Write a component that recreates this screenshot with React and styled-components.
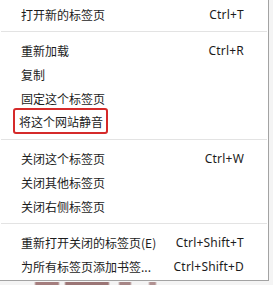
import React from "react";
import styled, { createGlobalStyle } from "styled-components";

const Global = createGlobalStyle`
  html, body { margin: 0; padding: 0; background: #f4f4f4; }
  body { width: 273px; height: 285px; overflow: hidden; }
  #root { width: 273px; height: 285px; }
`;

const Page = styled.div`
  position: relative;
  width: 273px;
  height: 285px;
  overflow: hidden;
  font-family: "Noto Sans CJK SC", "Noto Sans", sans-serif;
`;

const Menu = styled.div`
  width: 270px;
  margin: -1px 0 0 -1px;
  padding: 2px 0 2px;
  background: #ffffff;
  border: 1px solid #a3a3a3;
  box-sizing: border-box;
  display: flex;
  flex-direction: column;
`;

const Row = styled.div`
  height: 24px;
  display: flex;
  align-items: center;
  justify-content: space-between;
  padding: 0 24px 0 21px;
  font-size: 12px;
  color: #1c1c1c;
  white-space: nowrap;
`;

const Label = styled.span`
  display: inline-flex;
  align-items: center;
  height: ${(p) => (p.$marked ? "22px" : "auto")};
  margin-left: ${(p) => (p.$marked ? "-8px" : "0")};
  padding: ${(p) => (p.$marked ? "0 3px 0 4px" : "0")};
  border: ${(p) => (p.$marked ? "2px solid #d52a2a" : "none")};
  border-radius: 3px;
  margin-top: ${(p) => (p.$marked ? "-2px" : "0")};
`;

const Shortcut = styled.span`
  font-family: "Noto Sans", "Open Sans", sans-serif;
  font-size: 12px;
  color: #1c1c1c;
  letter-spacing: 0.2px;
`;

const Separator = styled.div`
  height: 1px;
  margin: 5px 1px 6px 1px;
  background: #e3e3e3;
`;

const Below = styled.div`
  height: 4px;
  margin-top: 1px;
  background: linear-gradient(
    90deg,
    transparent 0 34px,
    #8a5656 36px 58px,
    transparent 60px 64px,
    #7e4b4b 66px 108px,
    transparent 110px 118px,
    #8c6060 120px 130px,
    transparent 132px 148px,
    #9a7070 150px 155px,
    transparent 157px
  );
  opacity: 0.75;
  filter: blur(0.6px);
`;

const groups = [
  [["打开新的标签页", "Ctrl+T"]],
  [
    ["重新加载", "Ctrl+R"],
    ["复制"],
    ["固定这个标签页"],
    ["将这个网站静音", null, true],
  ],
  [["关闭这个标签页", "Ctrl+W"], ["关闭其他标签页"], ["关闭右侧标签页"]],
  [
    ["重新打开关闭的标签页(E)", "Ctrl+Shift+T"],
    ["为所有标签页添加书签...", "Ctrl+Shift+D"],
  ],
];

export default function App() {
  return (
    <Page>
      <Global />
      <Menu>
        {groups.map((g, gi) => (
          <React.Fragment key={gi}>
            {gi > 0 && <Separator />}
            {g.map(([label, sc, marked]) => (
              <Row key={label}>
                <Label $marked={marked}>{label}</Label>
                {sc && <Shortcut>{sc}</Shortcut>}
              </Row>
            ))}
          </React.Fragment>
        ))}
      </Menu>
      <Below />
    </Page>
  );
}
